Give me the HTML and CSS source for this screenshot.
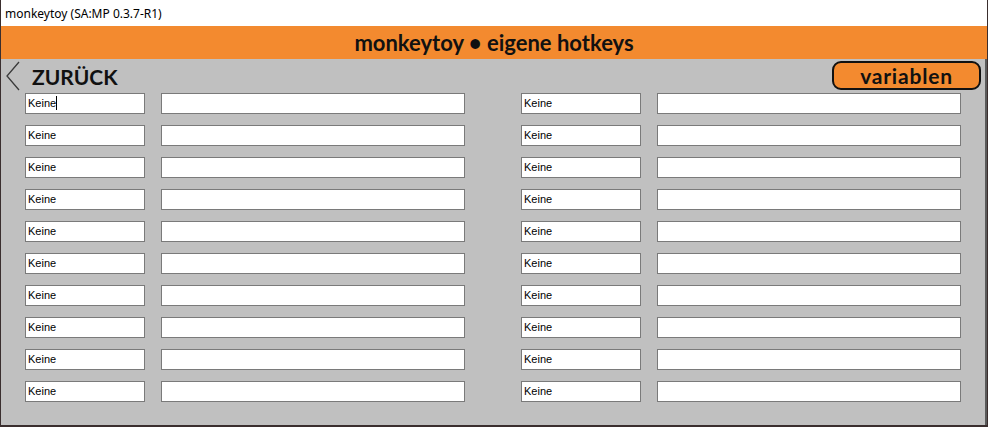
FILE: index.html
```html
<!DOCTYPE html>
<html lang="de">

<head>
  <meta charset="UTF-8" />
  <title>monkeytoy (SA:MP 0.3.7-R1)</title>
  <link rel="stylesheet" href="styles.css">
</head>

<body>
  <div class="window">

    <div class="titlebar">monkeytoy (SA:MP 0.3.7-R1)</div>

    <div class="banner">monkeytoy &bull; eigene hotkeys</div>

    <div class="content">
      <div class="toolbar">
        <a class="back" href="#">
          <svg width="16" height="30" viewBox="0 0 16 30">
            <polyline points="14,1 2,15 14,29" fill="none" stroke="#3a3a3a" stroke-width="1.3" />
          </svg>
          <span>ZURÜCK</span>
        </a>
        <button class="btn-vars">variablen</button>
      </div>

      <div class="columns">
        <div class="fields" id="links"></div>
        <div class="fields" id="rechts"></div>
      </div>
    </div>

  </div>

  <script>
    // 10 hotkeys pro Spalte
    function baueFelder(id, mitCursor) {
      const box = document.getElementById(id);
      for (let i = 0; i < 10; i++) {
        const taste = document.createElement("div");
        taste.className = "field field-key";
        taste.textContent = "Keine";
        if (mitCursor && i === 0) taste.classList.add("caret");
        const text = document.createElement("div");
        text.className = "field";
        box.appendChild(taste);
        box.appendChild(text);
      }
    }
    baueFelder("links", true);
    baueFelder("rechts", false);
  </script>
</body>

</html>
```

FILE: styles.css
```css
body {
  margin: 0;
  background-color: #3a2e2e;
  height: 427px;
  overflow: hidden;
}

.window {
  width: 986px;
  height: 425px;
  margin-left: 1px;
  display: flex;
  flex-direction: column;
}

.titlebar {
  height: 26px;
  background: #fff;
  font-family: 'Noto Sans', sans-serif;
  font-size: 12px;
  line-height: 28px;
  padding-left: 4px;
  color: #000;
}

.banner {
  height: 33px;
  background: #f38a2f;
  font-family: 'Lato', sans-serif;
  font-weight: bold;
  font-size: 22px;
  line-height: 33px;
  text-align: center;
  color: #111;
}

.content {
  flex: 1;
  background: #c0c0c0;
  border-right: 2px solid #5a5a5a;
}

.toolbar {
  height: 34px;
  display: flex;
  justify-content: space-between;
  align-items: flex-start;
}

.back {
  display: flex;
  align-items: center;
  gap: 11px;
  margin: 2px 0 0 4px;
  text-decoration: none;
  color: #111;
  font-family: 'Lato', sans-serif;
  font-weight: bold;
  font-size: 21px;
}

.btn-vars {
  margin: 2px 4px 0 0;
  width: 149px;
  height: 29px;
  background: #f38a2f;
  border: 2px solid #111;
  border-radius: 9px;
  font-family: 'Lato', sans-serif;
  font-weight: bold;
  font-size: 21px;
  letter-spacing: 0.8px;
  line-height: 22px;
  color: #111;
  padding: 0;
}

.columns {
  display: flex;
  gap: 56px;
  padding-left: 24px;
}

.fields {
  display: grid;
  grid-template-columns: 120px 304px;
  column-gap: 16px;
  row-gap: 11px;
}

.field {
  height: 21px;
  box-sizing: border-box;
  background: #fff;
  border: 1px solid #7a7a7a;
  font-family: 'Liberation Sans', sans-serif;
  font-size: 11px;
  line-height: 19px;
  padding-left: 2px;
  color: #000;
}

.caret::after {
  content: "";
  display: inline-block;
  width: 1px;
  height: 14px;
  background: #000;
  vertical-align: -3px;
}
```
